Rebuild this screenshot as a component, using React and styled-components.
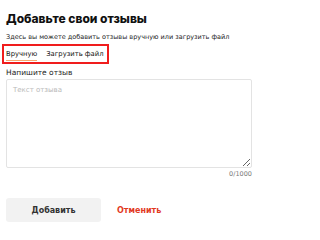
import { useState } from 'react'
import styled, { createGlobalStyle } from 'styled-components'

const GlobalStyle = createGlobalStyle`
  html, body {
    margin: 0;
    padding: 0;
    background: #fff;
  }
  body {
    font-family: "DejaVu Sans", "Noto Sans", sans-serif;
    color: #111;
  }
`

const MAX_LENGTH = 1000

const App = () => {
  const [tab, setTab] = useState('manual')
  const [text, setText] = useState('')

  return (
    <>
      <GlobalStyle />
      <StyledPage>
        <StyledTitle>Добавьте свои отзывы</StyledTitle>
        <StyledHint>Здесь вы можете добавить отзывы вручную или загрузить файл</StyledHint>

        <StyledTabs>
          <StyledTab active={tab === 'manual'} onClick={() => setTab('manual')}>Вручную</StyledTab>
          <StyledTab active={tab === 'file'} onClick={() => setTab('file')}>Загрузить файл</StyledTab>
        </StyledTabs>

        <StyledLabel htmlFor="review">Напишите отзыв</StyledLabel>
        <StyledTextarea
          id="review"
          placeholder="Текст отзыва"
          maxLength={MAX_LENGTH}
          value={text}
          onChange={(e) => setText(e.target.value)}
        />
        <StyledCounter>{text.length}/{MAX_LENGTH}</StyledCounter>

        <StyledActions>
          <StyledButtonAdd>Добавить</StyledButtonAdd>
          <StyledButtonCancel onClick={() => setText('')}>Отменить</StyledButtonCancel>
        </StyledActions>
      </StyledPage>
    </>
  )
}

const StyledPage = styled.div`
  display: flex;
  flex-direction: column;
  align-items: flex-start;
  width: 246px;
  padding: 11px 0 0 6px;
`

const StyledTitle = styled.h1`
  margin: 0;
  font-family: Inter, "DejaVu Sans", sans-serif;
  font-size: 12px;
  line-height: 16px;
  font-weight: 800;
`

const StyledHint = styled.p`
  margin: 6px 0 0 0;
  font-size: 6.5px;
  line-height: 8px;
  color: #222;
`

const StyledTabs = styled.div`
  display: flex;
  gap: 9px;
  margin: 3px 0 0 -4px;
  padding: 2px 3px 1px 2px;
  border: 2px solid #f01d1d;
`

const StyledTab = styled.button`
  padding: 2px 0 1px 0;
  border: none;
  border-bottom: 1px solid ${(props) => (props.active ? '#f7a86f' : 'transparent')};
  background: none;
  font-family: inherit;
  font-size: 6.8px;
  line-height: 9px;
  color: #111;
  cursor: pointer;
`

const StyledLabel = styled.label`
  margin: 4px 0 0 0;
  font-size: 7.5px;
  line-height: 10px;
  color: #222;
`

const StyledTextarea = styled.textarea`
  box-sizing: border-box;
  width: 246px;
  height: 89px;
  margin: 1px 0 0 0;
  padding: 6px 6px;
  border: 1px solid #e3e3e3;
  border-radius: 2px;
  font-family: inherit;
  font-size: 7px;
  line-height: 9px;
  color: #111;
  resize: vertical;
  outline: none;

  &::placeholder {
    color: #b9b9b9;
  }
`

const StyledCounter = styled.div`
  align-self: flex-end;
  margin: 2px 0 0 0;
  font-size: 6.5px;
  line-height: 9px;
  color: #7a7a7a;
`

const StyledActions = styled.div`
  display: flex;
  align-items: center;
  gap: 16px;
  margin: 19px 0 0 0;
`

const StyledButtonAdd = styled.button`
  width: 95px;
  height: 24px;
  border: none;
  border-radius: 3px;
  background: #f2f2f2;
  font-family: inherit;
  font-size: 8px;
  font-weight: 700;
  color: #333;
  cursor: pointer;
`

const StyledButtonCancel = styled.button`
  padding: 0;
  border: none;
  background: none;
  font-family: inherit;
  font-size: 8px;
  font-weight: 700;
  color: #e2391f;
  cursor: pointer;
`

export default App
